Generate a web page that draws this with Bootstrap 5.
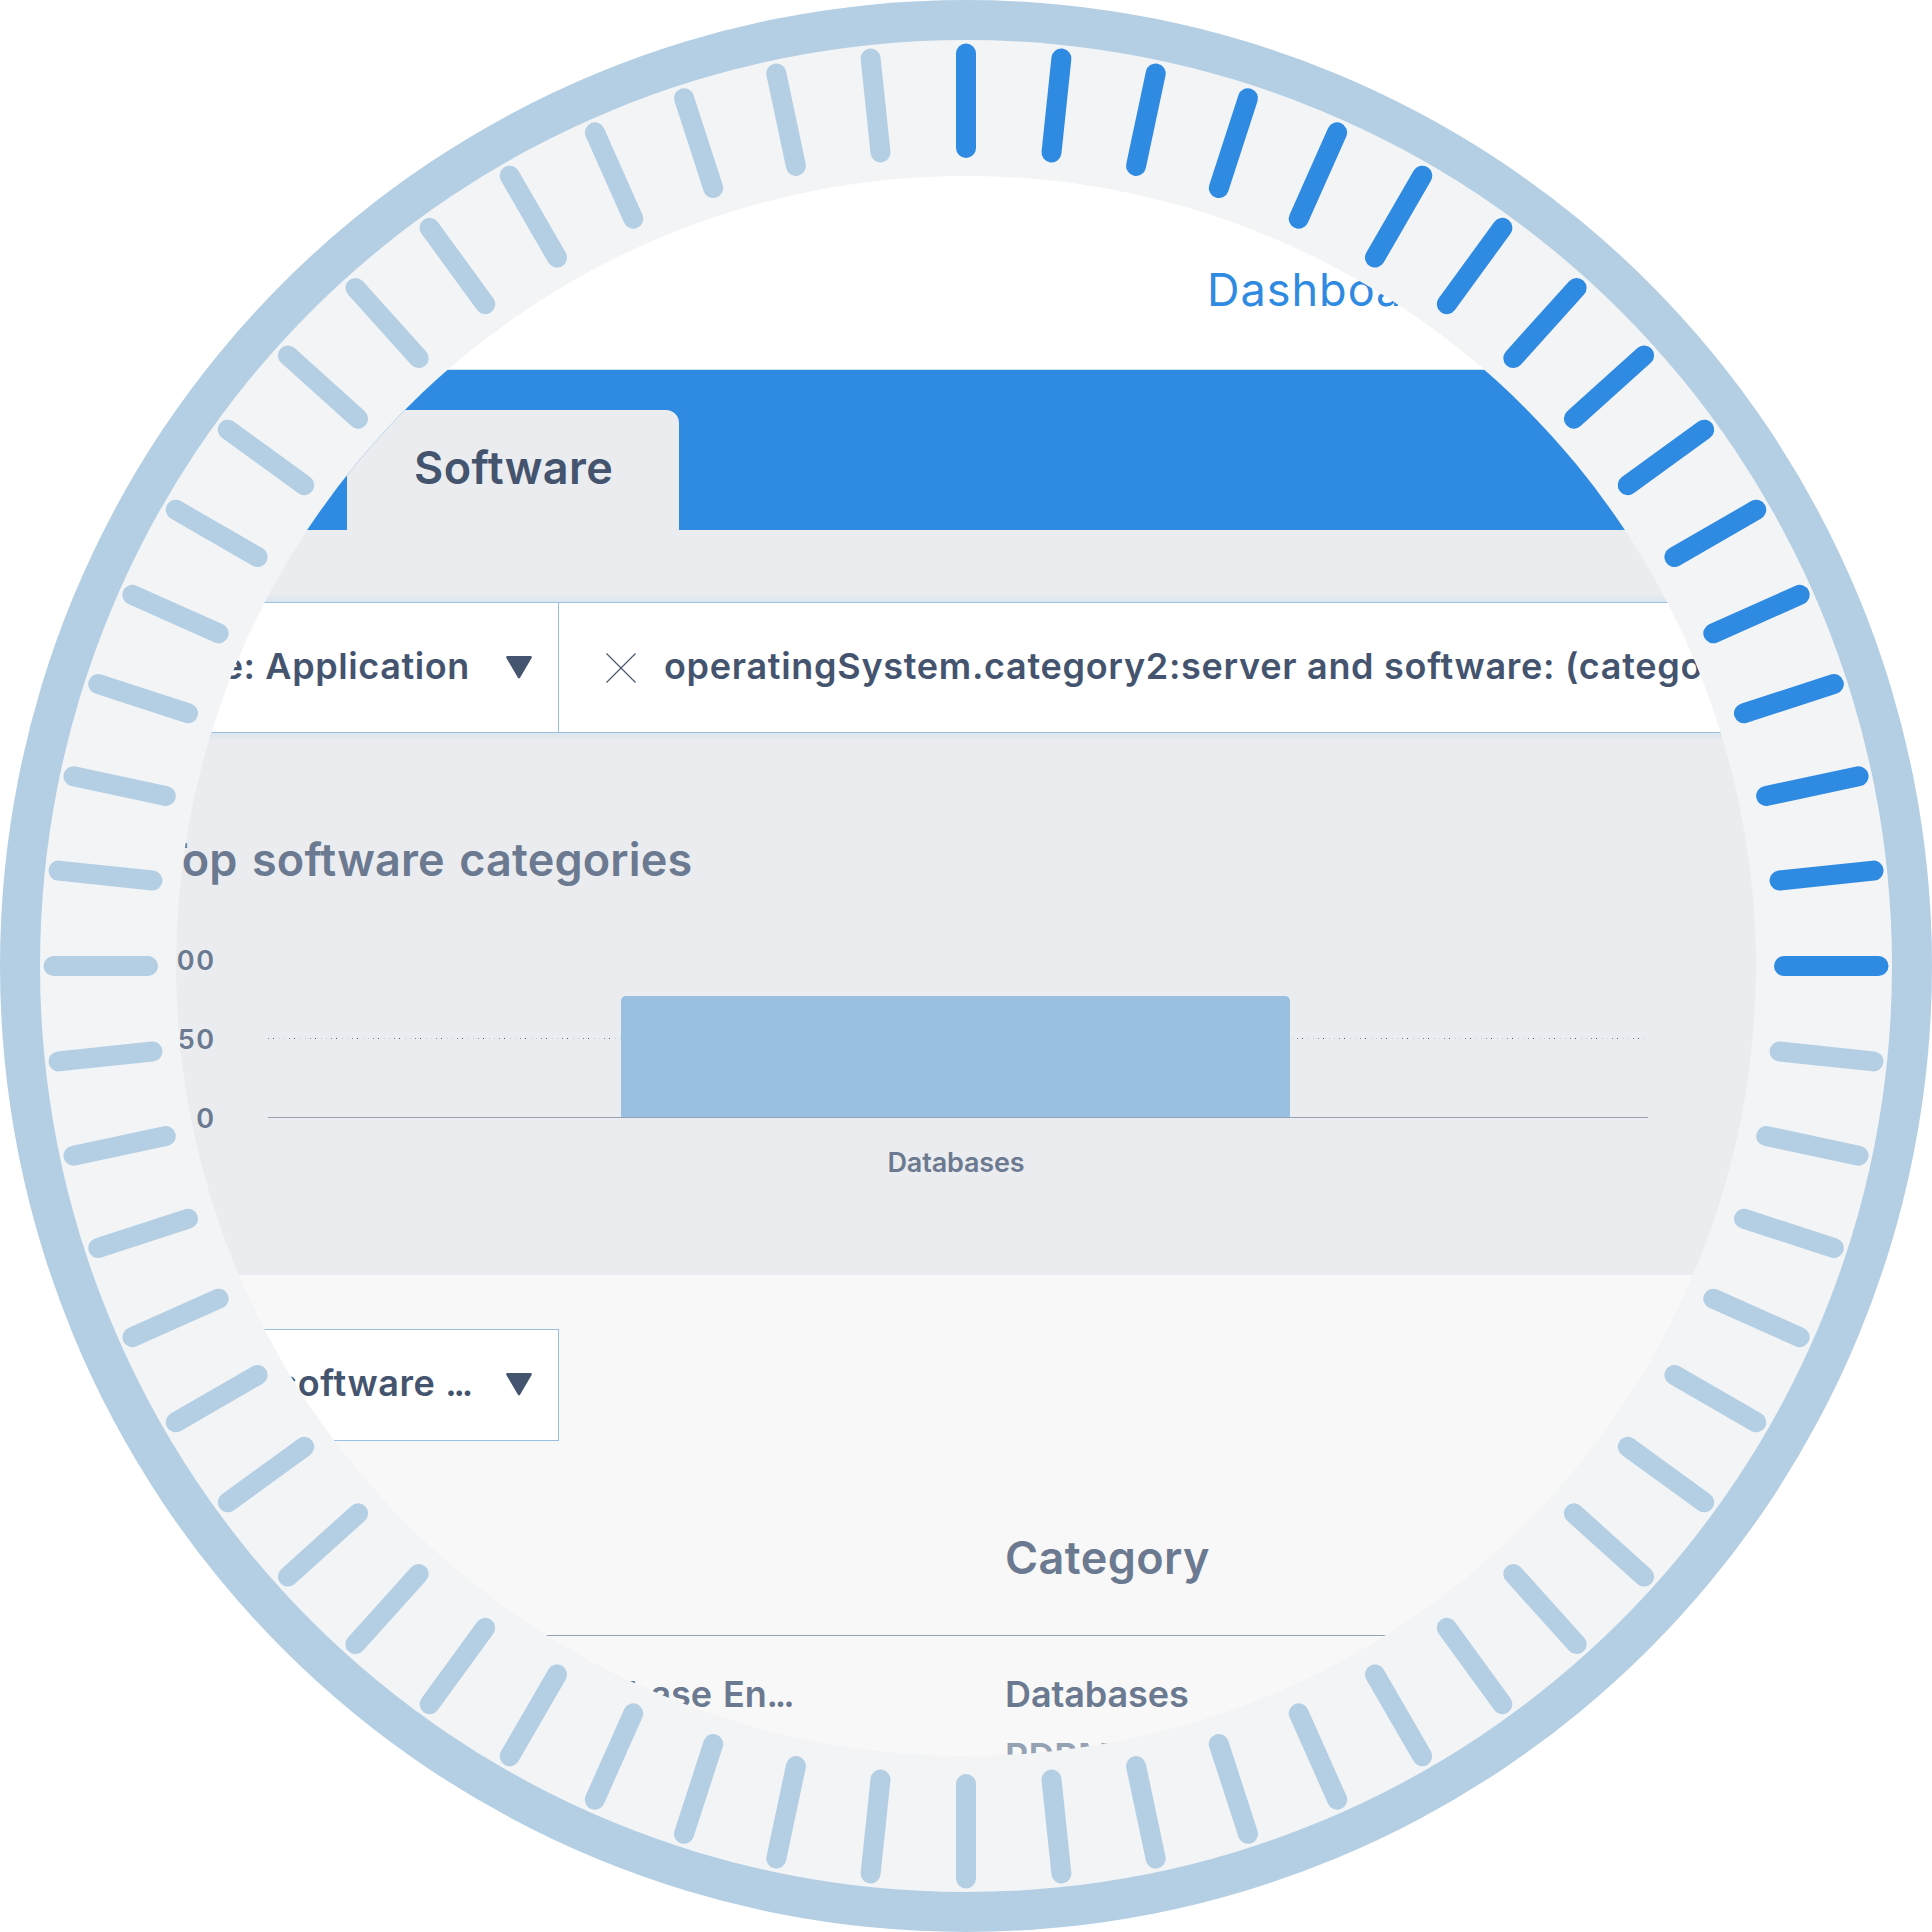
<!DOCTYPE html>
<html lang="en">
<head>
<meta charset="utf-8">
<meta name="viewport" content="width=device-width, initial-scale=1">
<title>Software</title>
<link rel="stylesheet" href="https://cdn.jsdelivr.net/npm/bootstrap@5.3.0/dist/css/bootstrap.min.css">
<style>
:root{--blue:#2f8ae1;--ring:#b4cfe4;--ink:#44546e;--muted:#6b7a90;--line:#99bfe1;--panel:#eaecef}
body{background:#fff;font-family:Inter,"Liberation Sans",sans-serif;font-weight:600;color:var(--ink);font-variant-ligatures:none}
.dial{width:1932px;height:1932px}
.lens{width:1580px;height:1580px;background:#f8f8f8}
.t-lg{font-size:45px;line-height:48px;letter-spacing:.4px;font-weight:600}
.t-md{font-size:36px;letter-spacing:.6px}
.t-sm{font-size:27px;line-height:36px;letter-spacing:-.15px}
.muted-ink{color:var(--muted)}
.topbar{height:194px;padding:90px 0 0 1031px;border-bottom:1px solid #d3e3ef}
.topbar a{color:var(--blue);font-weight:400;letter-spacing:1px}
.tabstrip{height:160px;background:var(--blue);padding:40px 0 0 171px}
.tab-on{width:332px;background:var(--panel);border-radius:13px 13px 0 0;padding:34px 0 0 67px}
.panel-top{height:745px;background:var(--panel);padding-top:72px}
.filterbar{height:131px;border:solid var(--line);border-width:1px 0;box-shadow:0 0 3px 5px #dfe7ee}
.picker{width:383px;padding-right:26px;gap:36px}
.filterbar .picker{border-right:1px solid var(--line)}
.picker span,.query span{margin-bottom:4px}
.query{padding-left:47px;gap:28px;letter-spacing:.7px}
.heading{margin:103px 0 0 -17px;letter-spacing:.15px;word-spacing:3px}
.heading span{letter-spacing:-7px}
.picker i,.grid-row i{font-style:normal;letter-spacing:-3.2px}
.chart{margin-top:59px}
.axis{width:38px}
.axis div{height:79px;letter-spacing:1.5px;margin-right:-1.5px}
.plot{width:1380px;height:159px;margin:16px 0 0 54px;border-bottom:1px solid #96a2b2;
 background:linear-gradient(90deg,#7b89a0 0 1px,transparent 1px 5px,#44546e 5px 6px,transparent 6px 11px,#a9cfe9 11px 12px,transparent 12px 16px,#b4cfe4 16px 17px,transparent 17px) 0 79px/21px 1px repeat-x}
.plot-bar{background:var(--line);border-radius:5px 5px 0 0}
.tick-label{margin:27px 2px 0 52px}
.picker-box{height:112px;margin-top:54px;padding-bottom:1px;border:1px solid var(--line);background:#fff}
.grid-head{margin-top:92px;height:103px;padding-top:1px;border-bottom:1px solid #96a2b2}
.col-a{width:829px}
.grid-row{padding-top:27px;line-height:62px;letter-spacing:-.1px}
.grid-row .col-a{padding-left:372px;word-spacing:2px}
.sub-ink{color:#95a2b4}
</style>
</head>
<body class="overflow-hidden">
<main class="dial position-relative d-flex align-items-center justify-content-center">
  <svg class="position-absolute top-0 start-0" width="1932" height="1932" viewBox="0 0 1932 1932" aria-hidden="true">
    <circle cx="966" cy="966" r="966" fill="#b4cfe4"/>
    <circle cx="966" cy="966" r="926" fill="#f2f4f6"/>
    <g id="ticks" stroke-width="20" stroke-linecap="round"></g>
  </svg>
  <div class="lens position-relative rounded-circle overflow-hidden">
    <nav class="topbar bg-white text-nowrap"><a class="t-lg d-block text-decoration-none" href="#">Dashboard</a></nav>
    <div class="tabstrip d-flex"><div class="tab-on t-lg">Software</div></div>
    <section class="panel-top">
      <div class="filterbar bg-white d-flex t-md text-nowrap">
        <div class="picker d-flex align-items-center justify-content-end flex-shrink-0">
          <span>Type: Application</span>
          <svg class="flex-shrink-0" width="26" height="23" viewBox="0 0 26 23"><path d="M2 0H24Q27 0 25.300 2.500L14.200 21.500Q13 23.500 11.800 21.500L.7 2.500Q-1 0 2 0Z" fill="#44546e"/></svg>
        </div>
        <div class="query d-flex align-items-center flex-shrink-0">
          <svg class="flex-shrink-0" width="30" height="30" viewBox="0 0 30 30"><path d="M.5.5l29 29M29.500.5l-29 29" stroke="#44546e" stroke-width="1.100"/></svg>
          <span>operatingSystem.category2:server and software: (category</span>
        </div>
      </div>
      <h2 class="heading t-lg muted-ink text-nowrap"><span>T</span>op software categories</h2>
      <div class="chart d-flex t-sm muted-ink">
        <div class="axis d-flex flex-column align-items-end flex-shrink-0"><div>100</div><div>50</div><div>0</div></div>
        <div class="flex-shrink-0">
          <div class="plot d-flex align-items-end justify-content-start"><div class="plot-bar" style="width:669px;height:121px;margin-left:353px"></div></div>
          <div class="tick-label text-center">Databases</div>
        </div>
      </div>
    </section>
    <div class="picker-box picker d-flex align-items-center justify-content-end t-md text-nowrap">
      <span>All software <i>...</i></span>
      <svg class="flex-shrink-0" width="26" height="23" viewBox="0 0 26 23"><path d="M2 0H24Q27 0 25.300 2.500L14.200 21.500Q13 23.500 11.800 21.500L.7 2.500Q-1 0 2 0Z" fill="#44546e"/></svg>
    </div>
    <div class="grid-head d-flex t-lg muted-ink"><div class="col-a">Name</div><div>Category</div></div>
    <div class="t-md grid-row d-flex muted-ink text-nowrap">
      <div class="col-a">Database En<i>...</i></div>
      <div><div>Databases</div><div class="sub-ink">RDBMS</div></div>
    </div>
  </div>
</main>
<script src="https://cdn.jsdelivr.net/npm/bootstrap@5.3.0/dist/js/bootstrap.bundle.min.js"></script>
<script>
// Sixty ticks around the dial; the first quarter is highlighted.
const g = document.getElementById('ticks');
for (let i = 59; i >= 0; i--) {
  const l = document.createElementNS('http://www.w3.org/2000/svg', 'line');
  const a = { x1: 966, x2: 966, y1: 53.5, y2: 148, transform: `rotate(${i * 6} 966 966)`, stroke: i <= 15 ? '#2f8ae1' : '#b4cfe4' };
  for (const k in a) l.setAttribute(k, a[k]);
  g.append(l);
}
</script>
</body>
</html>
